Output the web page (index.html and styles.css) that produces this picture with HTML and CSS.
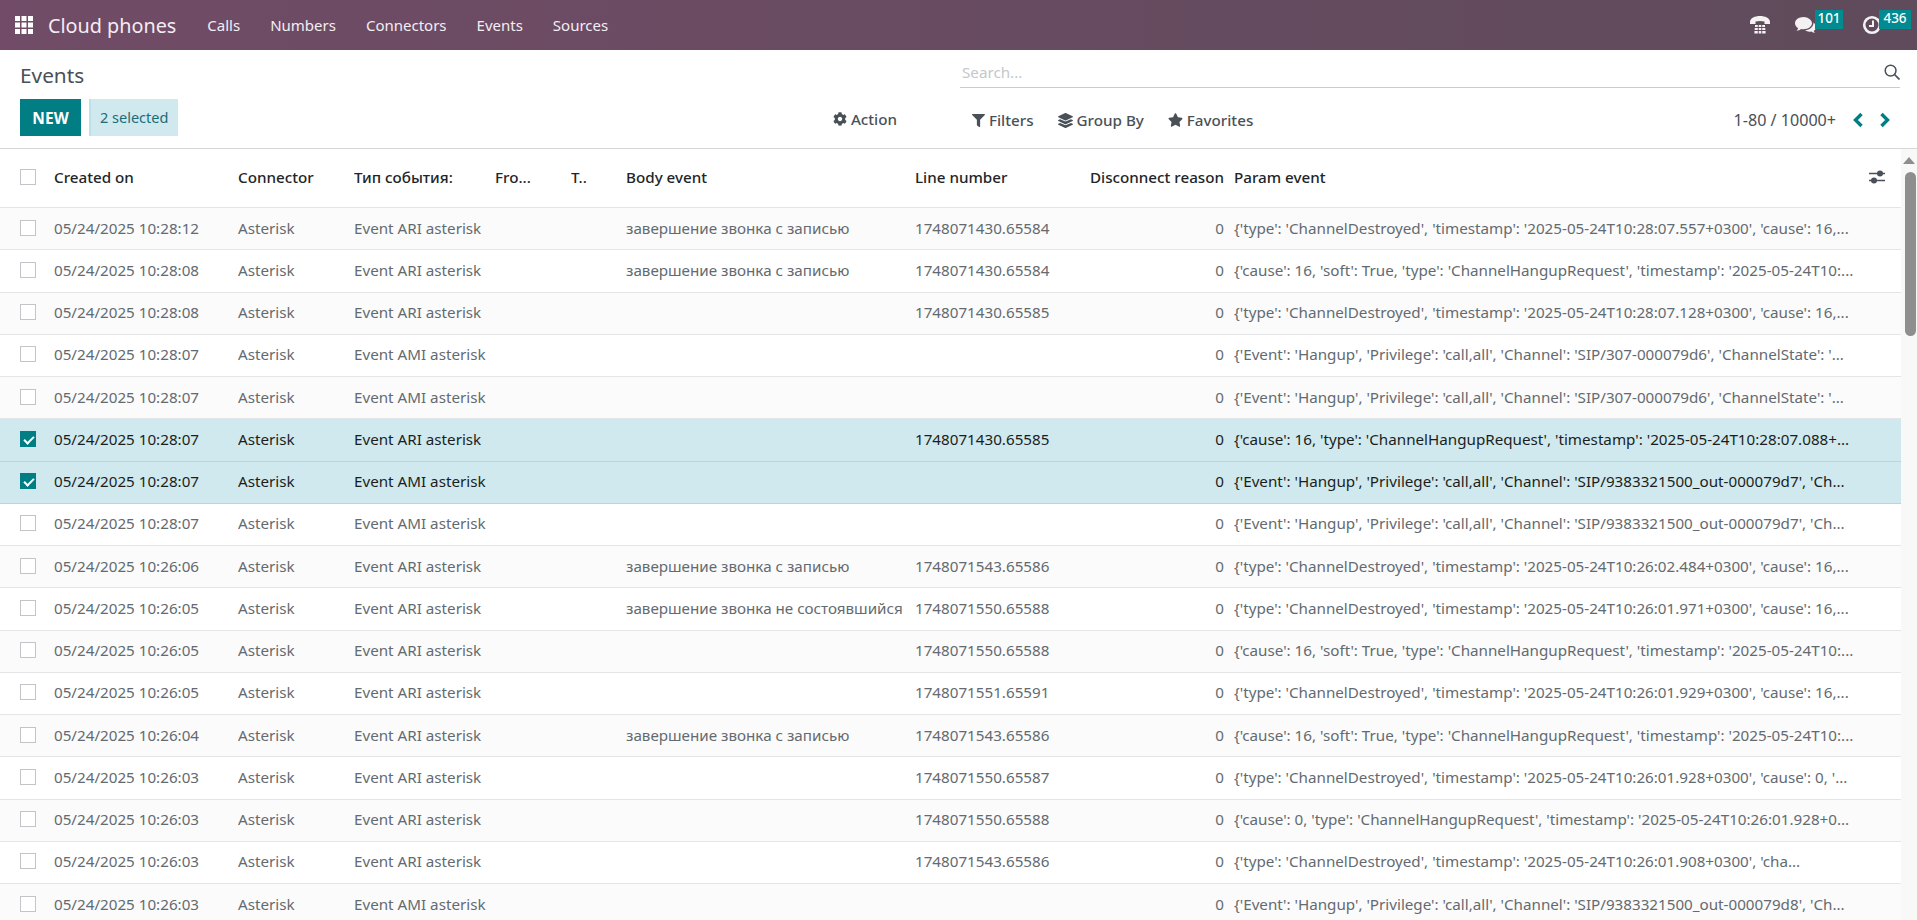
FILE: index.html
```html
<!DOCTYPE html>
<html lang="en">
<head>
<meta charset="utf-8">
<title>Events - Cloud phones</title>
<link rel="stylesheet" href="styles.css">
</head>
<body>
<header class="navbar">
  <svg class="apps" viewBox="0 0 18 18" width="18" height="18"><path fill="#fff" d="M0 0h5v5H0zM6.500 0h5v5h-5zM13 0h5v5h-5zM0 6.500h5v5H0zM6.500 6.500h5v5h-5zM13 6.500h5v5h-5zM0 13h5v5H0zM6.500 13h5v5h-5zM13 13h5v5h-5z"/></svg>
  <span class="brand">Cloud phones</span>
  <nav class="menu">
    <a>Calls</a><a>Numbers</a><a>Connectors</a><a>Events</a><a>Sources</a>
  </nav>
  <div class="systray">
    <span class="tray tray-phone">
      <svg viewBox="0 0 20 20" width="20" height="20"><path fill="#f4f1f3" d="M0 7C0 3 5 1 10 1s10 2 10 6v2h-5.500V6.500c-2.800-.8-6.200-.8-9 0V9H0z"/><path fill="#f4f1f3" d="M5 10h2.800v2H5zM8.700 10h2.600v2H8.700zM12.200 10H15v2h-2.800zM4.700 13h3.100v2H4.700zM8.700 13h2.600v2H8.700zM12.200 13h3.100v2h-3.100zM4.400 16h3.400v2.500H4.400zM8.700 16h2.600v2.500H8.700zM12.200 16h3.400v2.500h-3.400z"/></svg>
    </span>
    <span class="tray tray-chat">
      <svg viewBox="0 0 22 20" width="22" height="20"><path fill="#f4f1f3" d="M8.500 2C3.800 2 0 4.800 0 8.300c0 2 1.300 3.800 3.200 5-.3 1-.9 1.800-1.700 2.500 1.800-.1 3.300-.8 4.500-1.800.8.200 1.600.3 2.500.3 4.700 0 8.500-2.800 8.500-6S13.200 2 8.500 2z"/><path fill="#f4f1f3" d="M18.500 7.500c.2 4-3.400 7.300-8.500 7.800 1.300.9 2.900 1.400 4.500 1.400.7 0 1.300-.1 2-.2.900.9 2.100 1.400 3.500 1.500-.6-.6-1-1.300-1.200-2.100 1.400-.9 2.200-2.200 2.200-3.800 0-1.800-1-3.500-2.500-4.600z"/></svg>
      <b class="badge">101</b>
    </span>
    <span class="tray tray-clock">
      <svg viewBox="0 0 20 20" width="20" height="20"><circle cx="10" cy="10" r="7.800" fill="none" stroke="#f4f1f3" stroke-width="2.600"/><path fill="none" stroke="#f4f1f3" stroke-width="2" d="M11 5.500V11H7"/></svg>
      <b class="badge">436</b>
    </span>
  </div>
</header>

<section class="panel">
  <div class="panel-left">
    <h1 class="title">Events</h1>
    <div class="actions">
      <button class="btn-new">NEW</button>
      <span class="selected">2 selected</span>
      <span class="tool tool-action">
        <svg viewBox="0 0 512 512" width="14" height="14"><path fill="#495057" d="M487.4 315.7l-42.6-24.6c4.3-23.2 4.3-47 0-70.2l42.6-24.6c4.900-2.800 7.100-8.600 5.500-14-11.100-35.600-30-67.800-54.700-94.600-3.800-4.100-10-5.100-14.800-2.300L380.800 110c-17.900-15.400-38.500-27.300-60.800-35.100V25.800c0-5.600-3.900-10.500-9.400-11.700-36.700-8.200-74.300-7.800-109.200 0-5.500 1.200-9.400 6.100-9.400 11.700V75c-22.200 7.900-42.800 19.800-60.800 35.100L88.700 85.500c-4.900-2.800-11-1.900-14.800 2.300-24.700 26.700-43.600 58.900-54.700 94.600-1.700 5.400.6 11.200 5.500 14L67.300 221c-4.300 23.200-4.300 47 0 70.200l-42.600 24.600c-4.900 2.800-7.100 8.600-5.500 14 11.100 35.600 30 67.800 54.700 94.600 3.800 4.100 10 5.100 14.800 2.300l42.600-24.600c17.900 15.400 38.500 27.300 60.800 35.100v49.200c0 5.600 3.900 10.500 9.400 11.700 36.700 8.200 74.300 7.800 109.200 0 5.500-1.200 9.400-6.100 9.400-11.700v-49.200c22.200-7.900 42.800-19.800 60.800-35.100l42.600 24.600c4.900 2.800 11 1.900 14.800-2.300 24.700-26.700 43.600-58.900 54.700-94.600 1.500-5.500-.7-11.300-5.600-14.100zM256 336c-44.100 0-80-35.900-80-80s35.900-80 80-80 80 35.900 80 80-35.900 80-80 80z"/></svg>
        Action
      </span>
    </div>
  </div>
  <div class="panel-right">
    <div class="search">
      <span class="placeholder">Search...</span>
      <svg viewBox="0 0 16 16" width="16" height="16"><circle cx="6.600" cy="6.600" r="5.400" fill="none" stroke="#495057" stroke-width="1.500"/><path stroke="#495057" stroke-width="1.700" d="M10.500 10.500l5 5"/></svg>
    </div>
    <div class="filters">
      <span class="tool">
        <svg viewBox="0 0 512 512" width="13" height="13"><path fill="#495057" d="M487.976 0H24.028C2.710 0-8.047 25.866 7.058 40.971L192 225.941V432c0 7.831 3.821 15.170 10.237 19.662l80 55.980C298.020 518.690 320 507.493 320 487.980V225.941l184.947-184.970C520.021 25.896 509.338 0 487.976 0z"/></svg>
        Filters
      </span>
      <span class="tool">
        <svg viewBox="0 0 512 512" width="15" height="15"><path fill="#495057" d="M12.410 148.020l232.940 105.670c6.800 3.090 14.490 3.090 21.290 0l232.940-105.670c16.550-7.510 16.550-32.520 0-40.030L266.650 2.310a25.607 25.607 0 0 0-21.290 0L12.410 107.980c-16.550 7.510-16.550 32.530 0 40.040zm487.180 88.280l-58.090-26.330-161.640 73.270c-7.560 3.430-15.590 5.170-23.860 5.170s-16.290-1.740-23.860-5.170L70.510 209.970l-58.100 26.330c-16.550 7.500-16.550 32.500 0 40l232.940 105.590c6.800 3.080 14.490 3.080 21.290 0L499.590 276.300c16.550-7.500 16.550-32.500 0-40zm0 127.800l-57.870-26.230-161.860 73.370c-7.560 3.430-15.590 5.170-23.860 5.170s-16.290-1.740-23.860-5.170L70.290 337.870 12.410 364.100c-16.550 7.500-16.550 32.500 0 40l232.940 105.590c6.800 3.080 14.490 3.080 21.290 0L499.590 404.100c16.550-7.500 16.550-32.500 0-40z"/></svg>
        Group By
      </span>
      <span class="tool">
        <svg viewBox="0 0 576 512" width="15" height="14"><path fill="#495057" d="M259.300 17.800L194 150.200 47.900 171.500c-26.200 3.800-36.700 36.100-17.700 54.600l105.700 103-25 145.500c-4.500 26.300 23.200 46 46.400 33.700L288 439.600l130.700 68.700c23.200 12.200 50.900-7.400 46.400-33.700l-25-145.500 105.700-103c19-18.500 8.500-50.800-17.700-54.600L382 150.200 316.700 17.800c-11.700-23.600-45.600-23.900-57.400 0z"/></svg>
        Favorites
      </span>
      <span class="pager">1-80 / 10000+</span>
      <svg class="chev" viewBox="0 0 12 16" width="12" height="16"><path fill="none" stroke="#017e84" stroke-width="3.400" d="M9.500 2L3.500 8l6 6"/></svg>
      <svg class="chev chev-next" viewBox="0 0 12 16" width="12" height="16"><path fill="none" stroke="#017e84" stroke-width="3.400" d="M2.500 2l6 6-6 6"/></svg>
    </div>
  </div>
</section>

<main class="content">
  <div class="list">
    <div class="row head">
      <span class="c cb"><i class="check"></i></span>
      <span class="c">Created on</span><span class="c">Connector</span><span class="c">Тип события:</span><span class="c">Fro...</span><span class="c">T..</span><span class="c">Body event</span><span class="c">Line number</span><span class="c num">Disconnect reason</span>
      <span class="c param-head">Param event
        <svg class="sliders" viewBox="0 0 16 14" width="16" height="14"><path stroke="#495057" stroke-width="1.300" d="M0 3.500h16M0 10.500h16"/><circle cx="11" cy="3.500" r="3" fill="#495057"/><circle cx="5" cy="10.500" r="3" fill="#495057"/></svg>
      </span>
    </div>

    <div class="row"><span class="c cb"><i class="check"></i></span><span class="c">05/24/2025 10:28:12</span><span class="c">Asterisk</span><span class="c">Event ARI asterisk</span><span class="c"></span><span class="c"></span><span class="c">завершение звонка с записью</span><span class="c">1748071430.65584</span><span class="c num">0</span><span class="c">{'type': 'ChannelDestroyed', 'timestamp': '2025-05-24T10:28:07.557+0300', 'cause': 16,...</span></div>
    <div class="row"><span class="c cb"><i class="check"></i></span><span class="c">05/24/2025 10:28:08</span><span class="c">Asterisk</span><span class="c">Event ARI asterisk</span><span class="c"></span><span class="c"></span><span class="c">завершение звонка с записью</span><span class="c">1748071430.65584</span><span class="c num">0</span><span class="c">{'cause': 16, 'soft': True, 'type': 'ChannelHangupRequest', 'timestamp': '2025-05-24T10:...</span></div>
    <div class="row"><span class="c cb"><i class="check"></i></span><span class="c">05/24/2025 10:28:08</span><span class="c">Asterisk</span><span class="c">Event ARI asterisk</span><span class="c"></span><span class="c"></span><span class="c"></span><span class="c">1748071430.65585</span><span class="c num">0</span><span class="c">{'type': 'ChannelDestroyed', 'timestamp': '2025-05-24T10:28:07.128+0300', 'cause': 16,...</span></div>
    <div class="row"><span class="c cb"><i class="check"></i></span><span class="c">05/24/2025 10:28:07</span><span class="c">Asterisk</span><span class="c">Event AMI asterisk</span><span class="c"></span><span class="c"></span><span class="c"></span><span class="c"></span><span class="c num">0</span><span class="c">{'Event': 'Hangup', 'Privilege': 'call,all', 'Channel': 'SIP/307-000079d6', 'ChannelState': '...</span></div>
    <div class="row"><span class="c cb"><i class="check"></i></span><span class="c">05/24/2025 10:28:07</span><span class="c">Asterisk</span><span class="c">Event AMI asterisk</span><span class="c"></span><span class="c"></span><span class="c"></span><span class="c"></span><span class="c num">0</span><span class="c">{'Event': 'Hangup', 'Privilege': 'call,all', 'Channel': 'SIP/307-000079d6', 'ChannelState': '...</span></div>
    <div class="row sel"><span class="c cb"><i class="check on"></i></span><span class="c">05/24/2025 10:28:07</span><span class="c">Asterisk</span><span class="c">Event ARI asterisk</span><span class="c"></span><span class="c"></span><span class="c"></span><span class="c">1748071430.65585</span><span class="c num">0</span><span class="c">{'cause': 16, 'type': 'ChannelHangupRequest', 'timestamp': '2025-05-24T10:28:07.088+...</span></div>
    <div class="row sel"><span class="c cb"><i class="check on"></i></span><span class="c">05/24/2025 10:28:07</span><span class="c">Asterisk</span><span class="c">Event AMI asterisk</span><span class="c"></span><span class="c"></span><span class="c"></span><span class="c"></span><span class="c num">0</span><span class="c">{'Event': 'Hangup', 'Privilege': 'call,all', 'Channel': 'SIP/9383321500_out-000079d7', 'Ch...</span></div>
    <div class="row"><span class="c cb"><i class="check"></i></span><span class="c">05/24/2025 10:28:07</span><span class="c">Asterisk</span><span class="c">Event AMI asterisk</span><span class="c"></span><span class="c"></span><span class="c"></span><span class="c"></span><span class="c num">0</span><span class="c">{'Event': 'Hangup', 'Privilege': 'call,all', 'Channel': 'SIP/9383321500_out-000079d7', 'Ch...</span></div>
    <div class="row"><span class="c cb"><i class="check"></i></span><span class="c">05/24/2025 10:26:06</span><span class="c">Asterisk</span><span class="c">Event ARI asterisk</span><span class="c"></span><span class="c"></span><span class="c">завершение звонка с записью</span><span class="c">1748071543.65586</span><span class="c num">0</span><span class="c">{'type': 'ChannelDestroyed', 'timestamp': '2025-05-24T10:26:02.484+0300', 'cause': 16,...</span></div>
    <div class="row"><span class="c cb"><i class="check"></i></span><span class="c">05/24/2025 10:26:05</span><span class="c">Asterisk</span><span class="c">Event ARI asterisk</span><span class="c"></span><span class="c"></span><span class="c">завершение звонка не состоявшийся</span><span class="c">1748071550.65588</span><span class="c num">0</span><span class="c">{'type': 'ChannelDestroyed', 'timestamp': '2025-05-24T10:26:01.971+0300', 'cause': 16,...</span></div>
    <div class="row"><span class="c cb"><i class="check"></i></span><span class="c">05/24/2025 10:26:05</span><span class="c">Asterisk</span><span class="c">Event ARI asterisk</span><span class="c"></span><span class="c"></span><span class="c"></span><span class="c">1748071550.65588</span><span class="c num">0</span><span class="c">{'cause': 16, 'soft': True, 'type': 'ChannelHangupRequest', 'timestamp': '2025-05-24T10:...</span></div>
    <div class="row"><span class="c cb"><i class="check"></i></span><span class="c">05/24/2025 10:26:05</span><span class="c">Asterisk</span><span class="c">Event ARI asterisk</span><span class="c"></span><span class="c"></span><span class="c"></span><span class="c">1748071551.65591</span><span class="c num">0</span><span class="c">{'type': 'ChannelDestroyed', 'timestamp': '2025-05-24T10:26:01.929+0300', 'cause': 16,...</span></div>
    <div class="row"><span class="c cb"><i class="check"></i></span><span class="c">05/24/2025 10:26:04</span><span class="c">Asterisk</span><span class="c">Event ARI asterisk</span><span class="c"></span><span class="c"></span><span class="c">завершение звонка с записью</span><span class="c">1748071543.65586</span><span class="c num">0</span><span class="c">{'cause': 16, 'soft': True, 'type': 'ChannelHangupRequest', 'timestamp': '2025-05-24T10:...</span></div>
    <div class="row"><span class="c cb"><i class="check"></i></span><span class="c">05/24/2025 10:26:03</span><span class="c">Asterisk</span><span class="c">Event ARI asterisk</span><span class="c"></span><span class="c"></span><span class="c"></span><span class="c">1748071550.65587</span><span class="c num">0</span><span class="c">{'type': 'ChannelDestroyed', 'timestamp': '2025-05-24T10:26:01.928+0300', 'cause': 0, '...</span></div>
    <div class="row"><span class="c cb"><i class="check"></i></span><span class="c">05/24/2025 10:26:03</span><span class="c">Asterisk</span><span class="c">Event ARI asterisk</span><span class="c"></span><span class="c"></span><span class="c"></span><span class="c">1748071550.65588</span><span class="c num">0</span><span class="c">{'cause': 0, 'type': 'ChannelHangupRequest', 'timestamp': '2025-05-24T10:26:01.928+0...</span></div>
    <div class="row"><span class="c cb"><i class="check"></i></span><span class="c">05/24/2025 10:26:03</span><span class="c">Asterisk</span><span class="c">Event ARI asterisk</span><span class="c"></span><span class="c"></span><span class="c"></span><span class="c">1748071543.65586</span><span class="c num">0</span><span class="c">{'type': 'ChannelDestroyed', 'timestamp': '2025-05-24T10:26:01.908+0300', 'cha...</span></div>
    <div class="row"><span class="c cb"><i class="check"></i></span><span class="c">05/24/2025 10:26:03</span><span class="c">Asterisk</span><span class="c">Event AMI asterisk</span><span class="c"></span><span class="c"></span><span class="c"></span><span class="c"></span><span class="c num">0</span><span class="c">{'Event': 'Hangup', 'Privilege': 'call,all', 'Channel': 'SIP/9383321500_out-000079d8', 'Ch...</span></div>
  </div>
  <div class="scrollbar">
    <i class="arrow"></i>
    <i class="thumb"></i>
  </div>
</main>
</body>
</html>
```

FILE: styles.css
```css
* { box-sizing: border-box; }
html, body { height: 100%; }
body {
  margin: 0;
  overflow: hidden;
  display: flex;
  flex-direction: column;
  background: #fff;
  color: #495057;
  font-family: "Noto Sans", "Open Sans", sans-serif;
  font-size: 15.200px;
}

/* top bar */
.navbar {
  flex: none;
  height: 50px;
  display: flex;
  align-items: center;
  padding-left: 15px;
  background: linear-gradient(90deg, #714b67, #5f4b5b);
  color: #f3eef2;
}
.apps { flex: none; margin-top: -1px; }
.brand { margin-left: 15px; font-size: 19.800px; }
.menu { display: flex; margin-left: 31px; font-size: 15px; }
.menu a { margin-right: 30px; }
.systray { margin-left: auto; display: flex; align-items: center; height: 100%; }
.tray { position: relative; display: flex; }
.tray-phone { margin-right: 25px; }
.tray-chat { margin-right: 45px; }
.tray-clock { margin-right: 35px; }
.badge {
  position: absolute;
  top: -5px;
  height: 19px;
  line-height: 17px;
  text-align: center;
  background: #018a8f;
  color: #fff;
  font-size: 13.500px;
  font-weight: 500;
}
.tray-chat .badge { left: 20px; width: 28px; }
.tray-clock .badge { left: 17px; width: 32px; }

/* control panel */
.panel {
  flex: none;
  height: 99px;
  display: flex;
  border-bottom: 1px solid #d5d7db;
}
.panel-left { width: 960px; flex: none; padding-left: 20px; }
.title { margin: 12px 0 0; height: 37px; font-size: 20.800px; font-weight: 400; line-height: 26px; color: #495057; }
.actions { display: flex; align-items: center; height: 37px; }
.btn-new {
  height: 37px;
  width: 61px;
  padding: 0;
  border: 0;
  background: #017e84;
  color: #fff;
  font: 700 15.500px "Noto Sans", sans-serif;
}
.selected {
  margin-left: 8px;
  width: 89px;
  height: 37px;
  line-height: 36px;
  padding-left: 9px;
  background: #cfe9ee;
  border-left: 2px solid #bfe0e8;
  color: #1b6d78;
  font-size: 14.500px;
  white-space: nowrap;
}
.tool { display: flex; align-items: center; gap: 4px; font-weight: 500; color: #495057; white-space: nowrap; }
.tool-action { margin-left: auto; margin-right: 63px; margin-top: 2px; }
.panel-right { flex: 1; padding-right: 17px; }
.search {
  height: 38px;
  display: flex;
  align-items: center;
  justify-content: space-between;
  padding: 7px 0 0 2px;
  border-bottom: 1px solid #c9ccd2;
}
.placeholder { color: #c4c7cd; }
.filters { display: flex; align-items: center; height: 32px; margin-top: 16px; padding-left: 12px; gap: 24px; }
.pager { margin-left: auto; color: #495057; font-size: 16.100px; }
.chev { margin-left: -8px; }
.chev-next { margin-left: -9px; margin-right: 9px; }

/* list */
.content { flex: 1; min-height: 0; display: flex; }
.list { flex: 1; min-width: 0; overflow: hidden; }
.row {
  height: 42.250px;
  padding-bottom: 2px;
  display: grid;
  grid-template-columns: 54px 184px 116px 141px 76px 55px 289px 174px 145px 667px;
  align-items: center;
  border-bottom: 1px solid #e4e5e7;
  white-space: nowrap;
  color: #636a70;
}
.row:nth-child(even) { background: #fbfbfb; }
.row.sel { background: #d0e9ee; color: #1a1e21; border-bottom-color: #bbd5dc; }
.row.head {
  height: 59px;
  background: #fff;
  color: #212529;
  font-weight: 500;
}
.c { overflow: hidden; min-width: 0; }
.cb { padding-left: 20px; display: flex; }
.num { text-align: right; padding-right: 10px; }
.param-head { display: flex; align-items: center; justify-content: space-between; padding-right: 16px; }
.sliders { flex: none; }
.check {
  width: 16px;
  height: 16px;
  border: 1px solid #c2c4c8;
  background: #fff;
  display: block;
}
.check.on {
  position: relative;
  background: #017e84;
  border-color: #017e84;
}
.check.on::after {
  content: "";
  position: absolute;
  left: 5px;
  top: 2px;
  width: 4px;
  height: 8px;
  border: solid #fff;
  border-width: 0 2px 2px 0;
  transform: rotate(45deg);
}

/* scrollbar */
.scrollbar {
  flex: none;
  width: 16px;
  position: relative;
  background: #f8f8f8;
}
.arrow {
  position: absolute;
  left: 2px;
  top: 8px;
  width: 0;
  height: 0;
  border: 6.500px solid transparent;
  border-top: 0;
  border-bottom: 7px solid #8e8e8e;
}
.thumb {
  position: absolute;
  left: 4px;
  top: 23px;
  width: 11px;
  height: 164px;
  border-radius: 6px;
  background: #8e8e8e;
}
```
